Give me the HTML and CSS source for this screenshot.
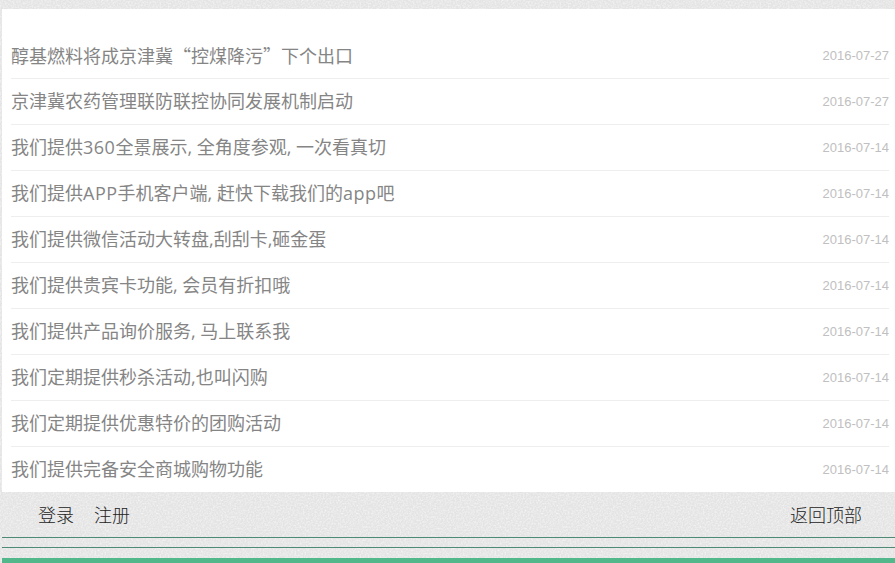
FILE: index.html
```html
<!DOCTYPE html>
<html lang="zh-CN">
<head>
<meta charset="utf-8">
<title>新闻列表</title>
<link rel="stylesheet" href="styles.css">
</head>
<body>
<main class="panel">
  <ul class="news">
    <li class="item"><a class="title">醇基燃料将成京津冀<span class="wide">“</span>控煤降污<span class="wide">”</span>下个出口</a><span class="date">2016-07-27</span></li>
    <li class="item"><a class="title">京津冀农药管理联防联控协同发展机制启动</a><span class="date">2016-07-27</span></li>
    <li class="item"><a class="title">我们提供<span class="latin">360</span>全景展示, 全角度参观, 一次看真切</a><span class="date">2016-07-14</span></li>
    <li class="item"><a class="title">我们提供<span class="latin">APP</span>手机客户端, 赶快下载我们的<span class="latin">app</span>吧</a><span class="date">2016-07-14</span></li>
    <li class="item"><a class="title">我们提供微信活动大转盘,刮刮卡,砸金蛋</a><span class="date">2016-07-14</span></li>
    <li class="item"><a class="title">我们提供贵宾卡功能, 会员有折扣哦</a><span class="date">2016-07-14</span></li>
    <li class="item"><a class="title">我们提供产品询价服务, 马上联系我</a><span class="date">2016-07-14</span></li>
    <li class="item"><a class="title">我们定期提供秒杀活动,也叫闪购</a><span class="date">2016-07-14</span></li>
    <li class="item"><a class="title">我们定期提供优惠特价的团购活动</a><span class="date">2016-07-14</span></li>
    <li class="item"><a class="title">我们提供完备安全商城购物功能</a><span class="date">2016-07-14</span></li>
  </ul>
</main>
<footer class="foot">
  <div class="foot-links">
    <nav class="foot-left"><a>登录</a><a>注册</a></nav>
    <a class="foot-top">返回顶部</a>
  </div>
  <div class="rule"></div>
  <div class="rule"></div>
</footer>
<div class="bar"></div>
</body>
</html>
```
FILE: styles.css
```css
html, body { margin: 0; padding: 0; }
body {
  height: 563px;
  overflow: hidden;
  display: flex;
  flex-direction: column;
  padding: 9px 0 0 2px;
  box-sizing: border-box;
  background-color: #e4e4e4;
  background-image: url("data:image/svg+xml,%3Csvg xmlns='http://www.w3.org/2000/svg' width='200' height='200'%3E%3Cfilter id='n' color-interpolation-filters='sRGB'%3E%3CfeTurbulence type='fractalNoise' baseFrequency='.6' numOctaves='2' stitchTiles='stitch'/%3E%3CfeColorMatrix values='0 0 0 0 1 0 0 0 0 1 0 0 0 0 1 1.6 0 0 0 -.6'/%3E%3C/filter%3E%3Crect width='200' height='200' filter='url(%23n)' opacity='.7'/%3E%3C/svg%3E");
  font-family: "Noto Sans CJK SC", "Liberation Sans", sans-serif;
}
.panel { background: #fff; padding-top: 24px; }
.news { list-style: none; margin: 0; padding: 0 6px 0 9px; }
.item {
  height: 46px;
  box-sizing: border-box;
  display: flex;
  justify-content: space-between;
  align-items: center;
  padding-bottom: 1px;
  border-bottom: 1px solid #eeeeee;
}
.item:last-child { height: 45px; border-bottom: 0; }
.title {
  font-family: "Open Sans", "Noto Sans CJK SC", sans-serif;
  font-size: 18px;
  line-height: 24px;
  color: #858585;
}
.wide { font-family: "Noto Sans CJK SC", sans-serif; }
.latin { letter-spacing: .5px; }
.date {
  font-family: "Liberation Sans", sans-serif;
  font-size: 13px;
  line-height: 18px;
  margin-top: 1px;
  color: #c0c0c0;
}
.foot { flex: 1; display: flex; flex-direction: column; }
.foot-links {
  height: 45px;
  box-sizing: border-box;
  padding: 0 33px 1px 36px;
  display: flex;
  justify-content: space-between;
  align-items: center;
  font-size: 18px;
  font-weight: 300;
  color: #222;
}
.foot-left { display: flex; gap: 20px; }
.rule { height: 1px; background: #4f8a76; margin-bottom: 9px; }
.bar { height: 5px; background: #52b88c; }
```
